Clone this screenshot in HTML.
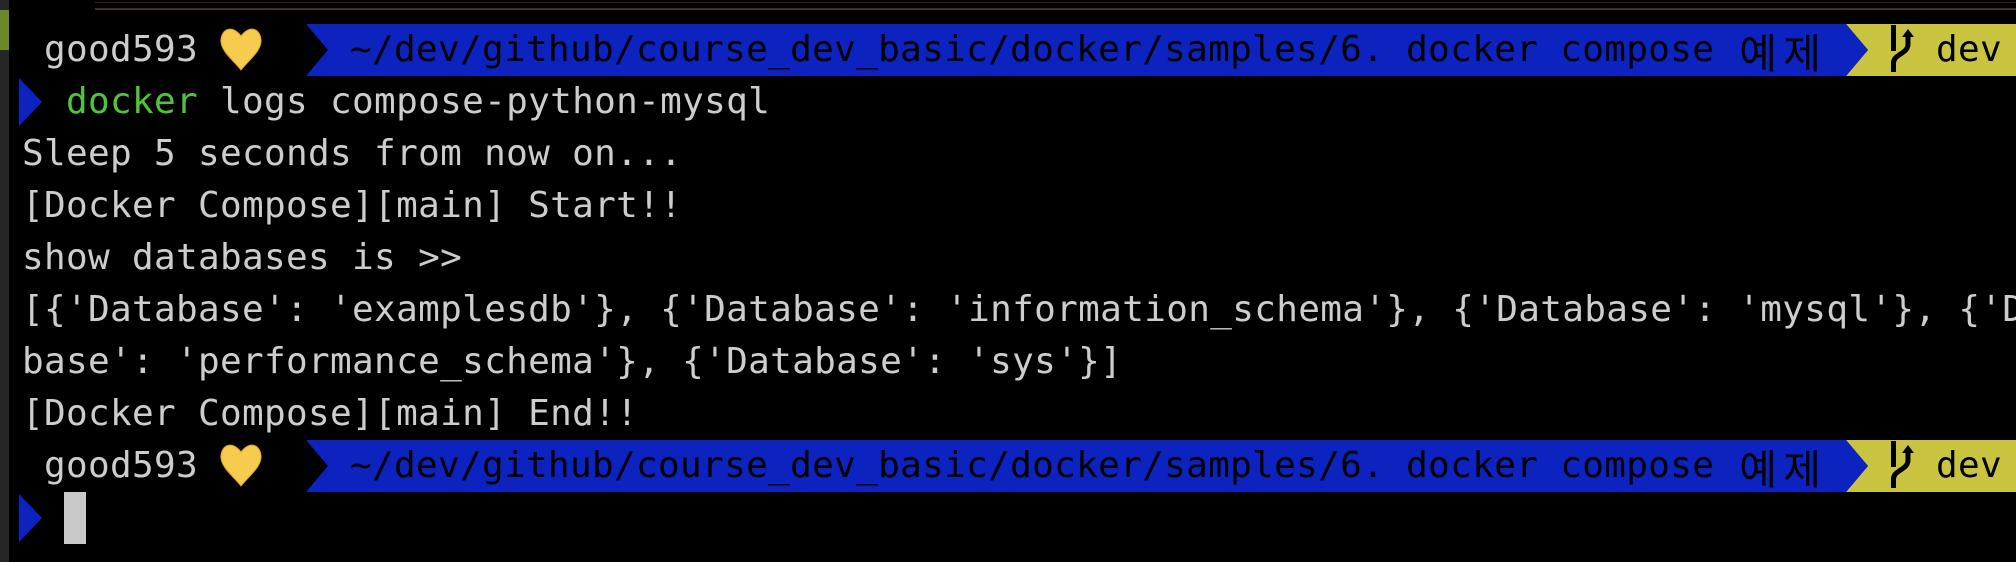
<!DOCTYPE html>
<html><head><meta charset="utf-8"><style>
html,body{margin:0;padding:0;background:#000;width:2016px;height:562px;overflow:hidden;position:relative}
.l{position:absolute;left:22px;height:52px;line-height:52px;font-family:"DejaVu Sans Mono","Liberation Mono","Noto Sans CJK KR",monospace;font-size:36px;letter-spacing:0.33px;color:#cdcdcd;white-space:pre}
.k{display:inline-block;width:44px;text-align:center;font-family:"Noto Sans CJK KR",sans-serif;font-size:41px;vertical-align:top}
.g{color:#4fc53a}
</style></head><body>
<div style="position:absolute;left:0;top:0;width:9px;height:562px;background:#262626"></div>
<div style="position:absolute;left:0;top:10px;width:9px;height:40px;background:#6a8a2a"></div>
<div style="position:absolute;left:95px;top:8px;width:1921px;height:2px;background:#4a2a2a"></div>
<div style="position:absolute;left:95px;top:2px;width:1921px;height:1px;background:#3a2020"></div>

<svg width="2016" height="562" style="position:absolute;left:0;top:0">
 <g id="p1">
  <polygon points="306,24 1846,24 1868,50 1846,76 306,76 328,50" fill="#0c23c0"/>
  <polygon points="1846,24 2016,24 2016,76 1846,76 1868,50" fill="#c8c440"/>
  <polygon points="1846,24 1868,50 1846,76" fill="#0c23c0"/>
  <path d="M241,36 C230,22 220,32 221,42 C222,52 233,60 241,70 C249,60 260,52 261,42 C262,32 252,22 241,36 Z" fill="#f5cc4e" stroke="#e0a030" stroke-width="1"/>
  <path d="M1893.5,25 V51 M1893.5,72 V63 C1893.5,54 1908,54 1908,44 V36" stroke="#000" stroke-width="5" fill="none"/>
  <polygon points="1902,37 1908,29 1914,37" fill="#000"/>
 </g>
 <use href="#p1" y="416"/>
 <polygon points="19,78 42,102 19,126" fill="#0c23c0"/>
 <polygon points="19,494 42,518 19,542" fill="#0c23c0"/>
 <rect x="64" y="492" width="22" height="52" fill="#c8c8c8"/>
</svg>

<div class="l" style="top:24px;left:44px">good593</div>
<div class="l" style="top:24px;left:350px;color:#000">~/dev/github/course_dev_basic/docker/samples/6. docker compose <span class="k">예</span><span class="k">제</span></div>
<div class="l" style="top:24px;left:1936px;color:#000">dev</div>
<div class="l" style="top:76px;left:66px"><span class="g">docker</span> logs compose-python-mysql</div>
<div class="l" style="top:128px">Sleep 5 seconds from now on...</div>
<div class="l" style="top:180px">[Docker Compose][main] Start!!</div>
<div class="l" style="top:232px">show databases is &gt;&gt;</div>
<div class="l" style="top:284px">[{'Database': 'examplesdb'}, {'Database': 'information_schema'}, {'Database': 'mysql'}, {'Data</div>
<div class="l" style="top:336px">base': 'performance_schema'}, {'Database': 'sys'}]</div>
<div class="l" style="top:388px">[Docker Compose][main] End!!</div>
<div class="l" style="top:440px;left:44px">good593</div>
<div class="l" style="top:440px;left:350px;color:#000">~/dev/github/course_dev_basic/docker/samples/6. docker compose <span class="k">예</span><span class="k">제</span></div>
<div class="l" style="top:440px;left:1936px;color:#000">dev</div>
</body></html>
